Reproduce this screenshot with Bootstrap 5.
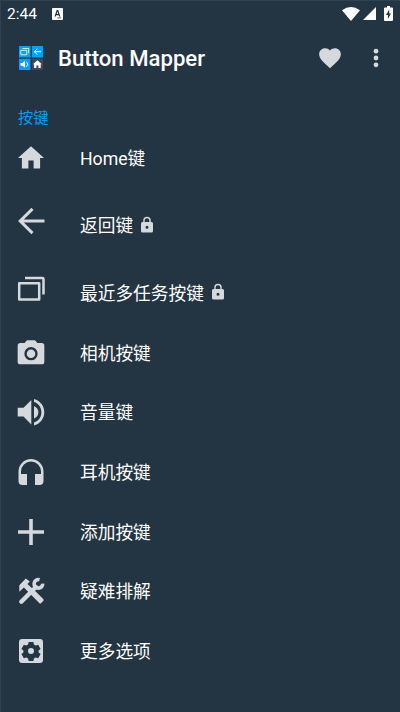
<!DOCTYPE html>
<html lang="zh-CN">
<head>
<meta charset="utf-8">
<meta name="viewport" content="width=device-width, initial-scale=1">
<title>Button Mapper</title>
<link rel="stylesheet" href="https://cdn.jsdelivr.net/npm/bootstrap@5.3.0/dist/css/bootstrap.min.css">
<style>
body{background:#233442;color:#fff;font-family:Roboto,"Noto Sans CJK SC",sans-serif;height:712px;overflow:hidden}
.screen{height:712px;border-left:1px solid #30424f;border-top:1px solid #30424f}
svg{display:block;flex:none;fill:#d5d8dc}
.status{height:25px;padding:0 7px 0 6px}
.status svg{fill:#fff}
.clock{font-size:15.5px;line-height:25px;width:45px;padding-top:2px}
.topbar{height:64px;padding:0 13px 0 17px}
.app-title{font-size:22.15px;font-weight:500;line-height:30px;margin:0 0 0 14px;white-space:nowrap}
.dots{margin-left:22px;margin-right:.5px}
.battery{margin-left:8px}
.signal{margin-left:3px}
.section-title{color:#0a9be8;font-size:15.3px;line-height:24px;margin:16px 0 0 17px}
.entry{height:59.7px;padding-left:14px;font-size:17.7px;line-height:26px}
.entry.tall{height:67.5px}
.entry>svg{margin-bottom:2px}
.entry .label{margin-left:33px;white-space:nowrap}
.tall .label{padding-top:8px}
.tall .label svg{margin:0 0 3px 5px}
.entries{margin-top:-1px}
.line{fill:none;stroke:#d5d8dc}
</style>
<script src="https://cdn.jsdelivr.net/npm/bootstrap@5.3.0/dist/js/bootstrap.bundle.min.js"></script>
</head>
<body>
<svg width="0" height="0" class="d-none"><symbol id="lock" viewBox="0 0 24 24"><path d="M18 8h-1V6A5 5 0 0 0 7 6v2H6a2 2 0 0 0-2 2v10a2 2 0 0 0 2 2h12a2 2 0 0 0 2-2V10a2 2 0 0 0-2-2zm-6 9a2 2 0 1 1 0-4 2 2 0 0 1 0 4zm3.100-9H8.900V6a3.100 3.100 0 0 1 6.200 0z"/></symbol></svg>
<div class="screen d-flex flex-column">
  <header class="status d-flex align-items-center">
    <span class="clock">2:44</span>
    <svg width="11" height="12" viewBox="0 0 11 12"><path fill-rule="evenodd" d="M1 0h9q1 0 1 1v10q0 1-1 1H1q-1 0-1-1V1q0-1 1-1zm3.700 2L2.500 8.500h1.300l.4-1.300h2.500l.4 1.300h1.300L6.200 2zm.75 1.500.8 2.600H4.700zM5.500 9.500v.8h3.800v-.8z"/></svg>
    <div class="d-flex align-items-center ms-auto">
      <svg width="18" height="14" viewBox="0 0 18 14"><path d="M0 3.200Q9-3 18 3.200L9 14z"/></svg>
      <svg class="signal" width="13" height="13" viewBox="0 0 13 13"><path d="M13 0v13H0z"/></svg>
      <svg class="battery" width="9" height="15" viewBox="0 0 9 15"><path fill-rule="evenodd" d="M3 0h3v1.500h2q1 0 1 1V14q0 1-1 1H1q-1 0-1-1V2.500q0-1 1-1h2zm2.200 3.500L2 9h1.900v4L7 7.500H5.200z"/></svg>
    </div>
  </header>
  <nav class="topbar d-flex align-items-center">
    <svg width="26" height="26" viewBox="0 0 26 26">
      <path fill="#03a2f3" d="M1 1h11.500v11.500H1zM13.800 1H25v11.500H13.800zM1 13.800h11.500V25H1z"/>
      <path fill="#3f4855" d="M13.800 13.800H25V25H13.800z"/>
      <g fill="none" stroke="#fff" stroke-width="1"><path stroke-opacity=".8" d="M2.800 5.300h6v4.500h-6zM4.500 3.500h6.200v4.800"/><path d="M23 6.700h-6.500M19.300 3.800l-2.900 2.900 2.900 2.900M8.500 16.800q2.500 2.500 0 5"/></g>
      <path fill="#fff" d="M2.500 18h2L7 15.800v7L4.500 20.800h-2zM19.400 15.200l4.500 4h-1.200v3.900h-2.300v-2.600h-2v2.600h-2.300v-3.900h-1.200z"/>
    </svg>
    <h1 class="app-title">Button Mapper</h1>
    <svg class="ms-auto" width="26" height="26" viewBox="0 0 24 24"><path d="m12 21.350-1.450-1.320C5.400 15.360 2 12.280 2 8.500 2 5.420 4.420 3 7.500 3c1.740 0 3.410.81 4.500 2.090C13.090 3.810 14.760 3 16.500 3 19.580 3 22 5.420 22 8.500c0 3.780-3.400 6.860-8.550 11.540z"/></svg>
    <svg class="dots" width="22" height="26" viewBox="0 0 22 26"><circle cx="11" cy="6.200" r="2.400"/><circle cx="11" cy="13" r="2.400"/><circle cx="11" cy="19.800" r="2.400"/></svg>
  </nav>
  <main>
    <h2 class="section-title fw-normal">按键</h2>
    <div class="entries">
    <div class="entry d-flex align-items-center"><svg width="32" height="32" viewBox="0 0 24.600 24.600"><path d="M10.300 20.300v-6h4v6h5v-8h3L12.300 3.300l-10 9h3v8z"/></svg><span class="label">Home键</span></div>
    <div class="entry tall d-flex align-items-center"><svg width="32" height="32" viewBox="0 0 32 32"><path class="line" stroke-width="3" d="M29.500 16H5M17.500 3.900 5.200 16l12.300 12.100"/></svg><span class="label d-flex align-items-center">返回键<svg width="18" height="18"><use href="#lock"/></svg></span></div>
    <div class="entry tall d-flex align-items-center"><svg width="32" height="32" viewBox="0 0 32 32"><path class="line" stroke-width="2.500" stroke-linejoin="round" d="M4.200 10.200h20v16.300h-20zM10 5h17.500q1 0 1 1V21.500"/></svg><span class="label d-flex align-items-center">最近多任务按键<svg width="18" height="18"><use href="#lock"/></svg></span></div>
    <div class="entry d-flex align-items-center"><svg width="32" height="32" viewBox="0 0 24 24"><path fill-rule="evenodd" d="M9 2.500 7.170 4.500H4a2 2 0 0 0-2 2v12a2 2 0 0 0 2 2h16a2 2 0 0 0 2-2v-12a2 2 0 0 0-2-2h-3.170L15 2.500zm3 15a5 5 0 1 1 0-10 5 5 0 0 1 0 10zm0-1.800a3.200 3.200 0 1 0 0-6.400 3.200 3.200 0 0 0 0 6.400z"/></svg><span class="label">相机按键</span></div>
    <div class="entry d-flex align-items-center"><svg width="32" height="32" viewBox="0 0 32 32"><path d="M2.700 11.700h5.800L16.300 4v24.500l-7.800-8H2.700zM19 9.900q4.400 2.200 4.400 6.300T19 22.600zM19 3c6 1.400 10.300 6.900 10.300 13.200S25 28 19 29.400v-3c4.400-1.300 7.400-5.300 7.400-10.200S23.400 7.300 19 6z"/></svg><span class="label">音量键</span></div>
    <div class="entry d-flex align-items-center"><svg width="32" height="32" viewBox="0 0 32 32"><path d="M16 3A12.500 12.500 0 0 0 3.500 15.500V25a4 4 0 0 0 4 4H12V18H6v-2.500a10 10 0 0 1 20 0V18h-6v11h4.500a4 4 0 0 0 4-4v-9.500A12.500 12.500 0 0 0 16 3z"/></svg><span class="label">耳机按键</span></div>
    <div class="entry d-flex align-items-center"><svg width="32" height="32" viewBox="0 0 32 32"><path d="M14.200 3h3.600v11.200H29v3.600H17.800V29h-3.600V17.800H3v-3.600h11.200z"/></svg><span class="label">添加按键</span></div>
    <div class="entry d-flex align-items-center"><svg width="32" height="32" viewBox="0 0 32 32"><path d="M4.300 10.200 10.800 3.500l4 3-2.400 2.500 8 7.200 7.800 7.800q1 1 0 2l-2 2q-1 1-2 0L8.900 12.500l-4.600 4.200z"/><path class="line" stroke-width="4.400" stroke-linecap="round" d="M6.300 26.700 21 12"/><path class="line" stroke-width="3.600" d="M24.500 4.700A4.300 4.300 0 1 0 27.700 8.600"/></svg><span class="label">疑难排解</span></div>
    <div class="entry d-flex align-items-center"><svg width="32" height="32" viewBox="0 0 32 32"><path fill-rule="evenodd" d="M7 4h18q3 0 3 3v18q0 3-3 3H7q-3 0-3-3V7q0-3 3-3zm6.600 3-.5 2.600-1.800 1-2.500-.9-2.400 4.200 2 1.700v1.800l-2 1.700 2.400 4.200 2.500-.9 1.800 1 .5 2.600h4.800l.5-2.600 1.800-1 2.500.9 2.400-4.200-2-1.700v-1.800l2-1.700-2.400-4.200-2.500.9-1.800-1-.5-2.600zM16 13a3 3 0 1 1 0 6 3 3 0 0 1 0-6z"/></svg><span class="label">更多选项</span></div>
    </div>
  </main>
</div>
</body>
</html>
